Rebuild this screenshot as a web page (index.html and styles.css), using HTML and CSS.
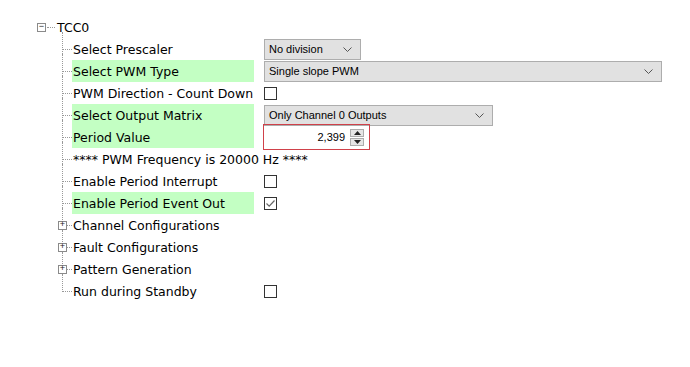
FILE: index.html
```html
<!DOCTYPE html>
<html lang="en">
<head>
  <meta charset="UTF-8" />
  <title>TCC0 Configuration</title>
  <link rel="stylesheet" href="styles.css">
</head>
<body>

  <div class="tree">
    <div class="root">
      <span class="toggle">&minus;</span>
      <span class="root-line"></span>
      <span class="root-label">TCC0</span>
    </div>

    <ul class="children">
      <li>
        <span class="label">Select Prescaler</span>
        <div class="combo combo-small">No division<svg class="chev" width="9" height="5" viewBox="0 0 9 5"><path d="M0.5 0.5 L4.5 4.5 L8.5 0.5" fill="none" stroke="#555" stroke-width="1"/></svg></div>
      </li>
      <li>
        <span class="label hl">Select PWM Type</span>
        <div class="combo combo-wide">Single slope PWM<svg class="chev" width="9" height="5" viewBox="0 0 9 5"><path d="M0.5 0.5 L4.5 4.5 L8.5 0.5" fill="none" stroke="#555" stroke-width="1"/></svg></div>
      </li>
      <li>
        <span class="label">PWM Direction - Count Down</span>
        <span class="check"></span>
      </li>
      <li>
        <span class="label hl">Select Output Matrix</span>
        <div class="combo combo-mid">Only Channel 0 Outputs<svg class="chev" width="9" height="5" viewBox="0 0 9 5"><path d="M0.5 0.5 L4.5 4.5 L8.5 0.5" fill="none" stroke="#555" stroke-width="1"/></svg></div>
      </li>
      <li>
        <span class="label hl">Period Value</span>
        <div class="spin">
          <span class="spin-value">2,399</span>
          <span class="spin-btns">
            <span class="spin-btn"><svg width="7" height="4" viewBox="0 0 7 4"><path d="M3.5 0 L7 4 L0 4 Z" fill="#222"/></svg></span>
            <span class="spin-btn"><svg width="7" height="4" viewBox="0 0 7 4"><path d="M0 0 L7 0 L3.5 4 Z" fill="#222"/></svg></span>
          </span>
        </div>
      </li>
      <li>
        <span class="text">**** PWM Frequency is 20000 Hz ****</span>
      </li>
      <li>
        <span class="label">Enable Period Interrupt</span>
        <span class="check"></span>
      </li>
      <li>
        <span class="label hl">Enable Period Event Out</span>
        <span class="check"><svg width="11" height="11" viewBox="0 0 11 11"><path d="M1.5 5.5 L4.2 8.2 L9.5 2.5" fill="none" stroke="#666" stroke-width="1.2"/></svg></span>
      </li>
      <li class="folder">
        <span class="toggle">+</span>
        <span class="text">Channel Configurations</span>
      </li>
      <li class="folder">
        <span class="toggle">+</span>
        <span class="text">Fault Configurations</span>
      </li>
      <li class="folder">
        <span class="toggle">+</span>
        <span class="text">Pattern Generation</span>
      </li>
      <li>
        <span class="label">Run during Standby</span>
        <span class="check"></span>
      </li>
    </ul>
  </div>

</body>
</html>
```

FILE: styles.css
```css
body { margin: 0; background: #fff; font-family: "DejaVu Sans", Verdana, sans-serif; font-size: 12.5px; color: #000; }

.tree { padding-top: 16px; }

.root { display: flex; align-items: center; height: 22px; padding-left: 37px; }
.root-line { width: 8px; border-top: 1px dotted #999; margin-left: 1px; }
.root-label { padding: 1px 0 0 2px; }

.toggle {
  box-sizing: border-box;
  width: 9px; height: 9px;
  border: 1px solid #8a8a8a;
  background: #fff;
  font-family: "Liberation Mono", monospace;
  font-size: 9px; line-height: 6px;
  text-align: center; color: #222;
}

.children { list-style: none; margin: 0 0 0 62px; padding: 0; }
.children li {
  position: relative;
  display: flex; align-items: center;
  height: 22px;
  padding-left: 10px;
}
.children li::before {
  content: ""; position: absolute;
  left: 0; top: -6px; bottom: 0;
  border-left: 1px dotted #999;
}
.children li:last-child::before { bottom: 10px; }
.children li::after {
  content: ""; position: absolute;
  left: 1px; top: 11px; width: 9px;
  border-top: 1px dotted #999;
}
.children li.folder .toggle { position: absolute; left: -4px; top: 7px; z-index: 1; }

.label {
  width: 182px; height: 22px; line-height: 21px;
  padding: 1px 0 0 1px; box-sizing: border-box;
  white-space: nowrap;
  margin-right: 10px;
}
.label.hl { background: #c3ffc3; }
.text { padding: 1px 0 0 1px; white-space: nowrap; }

.combo {
  box-sizing: border-box;
  display: flex; align-items: center; justify-content: space-between;
  height: 21px; padding: 0 8px 0 4px;
  background: #e1e1e1; border: 1px solid #adadad;
  font-family: "Liberation Sans", Arial, sans-serif; font-size: 11px;
}
.combo-small { width: 97px; }
.combo-wide { width: 398px; }
.combo-mid { width: 229px; }
.chev { margin-top: 1px; }

.check {
  box-sizing: border-box;
  width: 13px; height: 13px;
  border: 1px solid #333; background: #fff;
  display: flex; align-items: center; justify-content: center;
}

.spin {
  box-sizing: border-box;
  width: 107px; height: 26px;
  margin-left: -1px;
  border: 1px solid #d0414a;
  display: flex; align-items: center; justify-content: flex-end;
  padding-right: 5px;
  font-family: "Liberation Sans", Arial, sans-serif; font-size: 11px;
}
.spin-value { margin-right: 5px; }
.spin-btns { display: flex; flex-direction: column; gap: 1px; }
.spin-btn {
  box-sizing: border-box;
  width: 14px; height: 8px;
  background: #e5e5e5; border: 1px solid #acacac;
  display: flex; align-items: center; justify-content: center;
}
```
